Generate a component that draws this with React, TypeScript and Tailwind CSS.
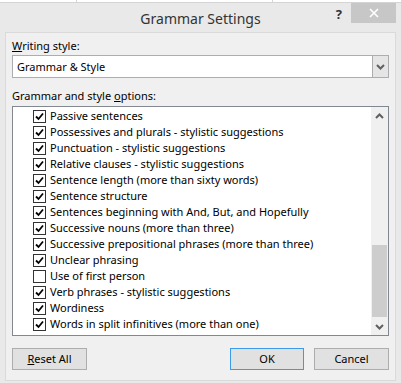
import { useState } from 'react';

const options: { label: string; checked: boolean }[] = [
  { label: 'Passive sentences', checked: true },
  { label: 'Possessives and plurals - stylistic suggestions', checked: true },
  { label: 'Punctuation - stylistic suggestions', checked: true },
  { label: 'Relative clauses - stylistic suggestions', checked: true },
  { label: 'Sentence length (more than sixty words)', checked: true },
  { label: 'Sentence structure', checked: true },
  { label: 'Sentences beginning with And, But, and Hopefully', checked: true },
  { label: 'Successive nouns (more than three)', checked: true },
  { label: 'Successive prepositional phrases (more than three)', checked: true },
  { label: 'Unclear phrasing', checked: true },
  { label: 'Use of first person', checked: false },
  { label: 'Verb phrases - stylistic suggestions', checked: true },
  { label: 'Wordiness', checked: true },
  { label: 'Words in split infinitives (more than one)', checked: true },
];

function Chevron({ up }: { up?: boolean }) {
  return (
    <svg width="9" height="6" viewBox="0 0 9 6" className="block">
      <path d={up ? 'M1 5 L4.5 1.5 L8 5' : 'M1 1 L4.5 4.5 L8 1'} fill="none" stroke="#606060" strokeWidth="2" />
    </svg>
  );
}

function CheckBox({ checked, onClick }: { checked: boolean; onClick: () => void }) {
  return (
    <button onClick={onClick} className="w-[13px] h-[13px] border border-[#333] bg-white flex items-center justify-center shrink-0">
      {checked && (
        <svg width="9" height="9" viewBox="0 0 9 9">
          <path d="M1 4.5 L3.5 7 L8 1.5" fill="none" stroke="#000" strokeWidth="1.8" />
        </svg>
      )}
    </button>
  );
}

export default function App() {
  const [items, setItems] = useState(options);

  const toggle = (i: number) =>
    setItems(items.map((it, j) => (j === i ? { ...it, checked: !it.checked } : it)));

  return (
    <div className="w-[401px] h-[383px] bg-white flex flex-col text-[11px] text-black" style={{ fontFamily: '"Noto Sans", "Liberation Sans", sans-serif' }}>
      <div className="h-[3px] flex border-b border-[#d4d4d4]">
        <div className="w-[77px] border-r border-[#d4d4d4]" />
        <div className="w-[196px] border-r border-[#d4d4d4]" />
        <div className="flex-1" />
      </div>
      <div className="flex-1 bg-[#e9e9e9] flex flex-col px-[5px] pb-[2px]">
        <div className="h-[29px] grid grid-cols-[1fr_auto_1fr]">
          <div />
          <div className="text-[14px] text-[#333] pt-[5px]">Grammar Settings</div>
          <div className="flex justify-end items-start">
            <span className="mt-[2px] mr-[9px] text-[13px] font-bold text-[#333]">?</span>
            <button className="w-[45px] h-[20px] bg-[#c7c7c7] flex items-center justify-center">
              <svg width="10" height="10" viewBox="0 0 10 10">
                <path d="M1 1 L9 9 M9 1 L1 9" stroke="#fff" strokeWidth="1.6" />
              </svg>
            </button>
          </div>
        </div>
        <div className="flex-1 bg-[#f0f0f0] border border-[#dadada] px-[6px] pt-[5px] flex flex-col">
          <div className="h-[16px] leading-[16px]"><span className="underline">W</span>riting style:</div>
          <div className="mt-[1px] h-[23px] flex border border-[#abadb3] bg-white">
            <div className="flex-1 pl-[4px] leading-[21px]">Grammar &amp; Style</div>
            <div className="w-[16px] bg-[#e5e5e5] border-l border-[#acacac] flex items-center justify-center">
              <Chevron />
            </div>
          </div>
          <div className="mt-[10px] h-[16px] leading-[16px]">Grammar and style <span className="underline">o</span>ptions:</div>
          <div className="mt-[2px] h-[230px] flex border border-[#828790] bg-white">
            <div className="flex-1 pt-[1px] pl-[20px]">
              {items.map((it, i) => (
                <div key={it.label} className="h-[16px] flex items-center gap-[4px] whitespace-nowrap">
                  <CheckBox checked={it.checked} onClick={() => toggle(i)} />
                  <span>{it.label}</span>
                </div>
              ))}
            </div>
            <div className="w-[17px] bg-[#f0f0f0] flex flex-col">
              <div className="h-[17px] flex items-center justify-center"><Chevron up /></div>
              <div className="flex-1 flex flex-col justify-end pb-[1px]">
                <div className="h-[72px] mx-[1px] bg-[#cdcdcd]" />
              </div>
              <div className="h-[17px] flex items-center justify-center"><Chevron /></div>
            </div>
          </div>
          <div className="mt-[12px] flex">
            <button className="w-[75px] h-[22px] border border-[#adadad] bg-[#e1e1e1]"><span className="underline">R</span>eset All</button>
            <div className="flex-1" />
            <button className="w-[74px] h-[22px] border border-[#3c9be8] bg-[#e1e1e1]">OK</button>
            <button className="ml-[10px] w-[75px] h-[22px] border border-[#adadad] bg-[#e1e1e1]">Cancel</button>
          </div>
        </div>
      </div>
    </div>
  );
}
